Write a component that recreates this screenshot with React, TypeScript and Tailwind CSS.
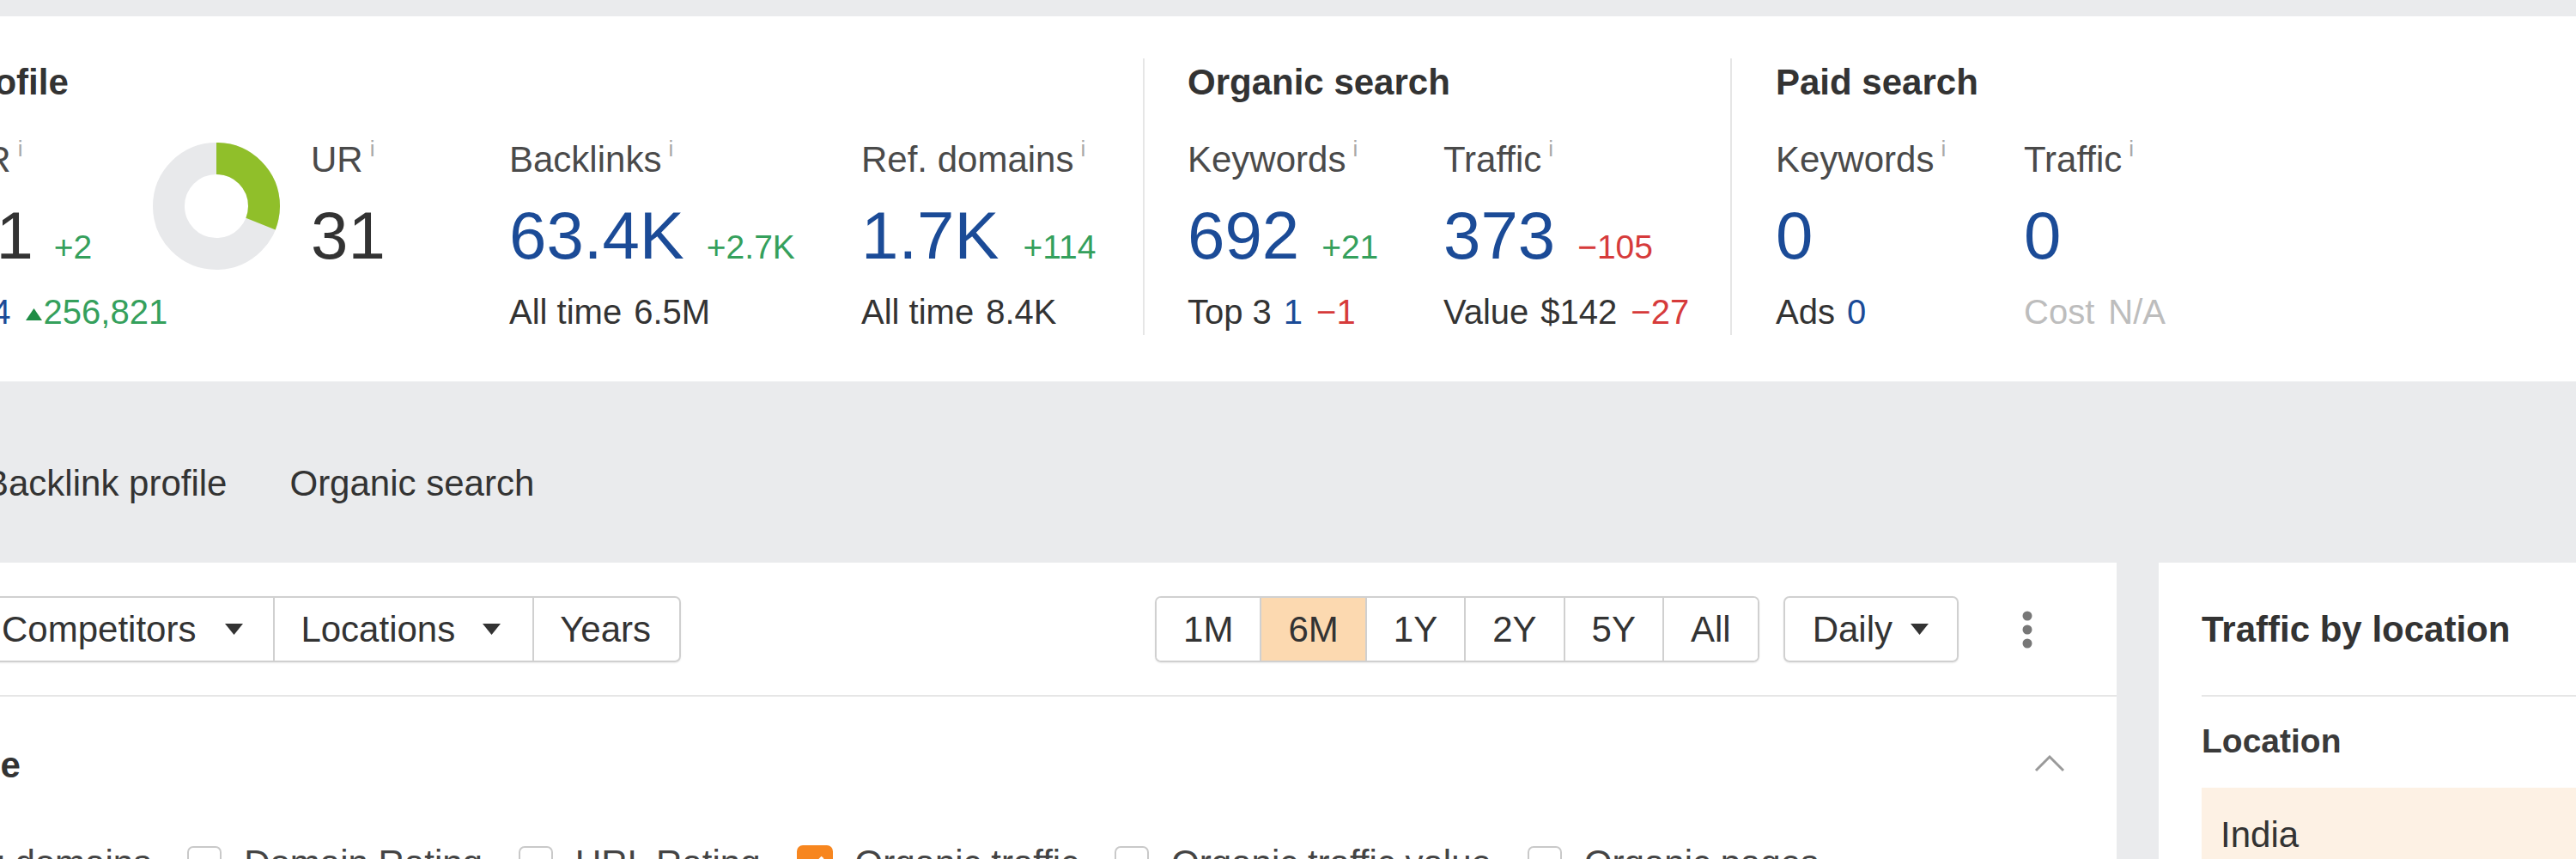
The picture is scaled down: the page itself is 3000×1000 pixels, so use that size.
import React from "react";

const Info = () => (
  <span className="relative -top-[18px] ml-[8px] text-[26px] text-[#a9a9a9]">i</span>
);

const Label = ({ children }: { children: React.ReactNode }) => (
  <div className="h-[48px] leading-[48px] text-[42px] text-[#4a4a4a] whitespace-nowrap">
    {children}
    <Info />
  </div>
);

const Donut = ({ value }: { value: number }) => {
  const r = 55.5;
  const c = 2 * Math.PI * r;
  return (
    <svg width="148" height="148" viewBox="0 0 148 148" className="mt-[4px] shrink-0">
      <circle cx="74" cy="74" r={r} fill="none" stroke="#e8e9eb" strokeWidth="37" />
      <circle
        cx="74"
        cy="74"
        r={r}
        fill="none"
        stroke="#90bf2a"
        strokeWidth="37"
        strokeDasharray={`${(c * value) / 100} ${c}`}
        transform="rotate(-90 74 74)"
      />
    </svg>
  );
};

const Caret = () => (
  <svg width="21" height="13" viewBox="0 0 21 13" className="shrink-0">
    <path d="M0 0h21L10.5 13z" fill="#333" />
  </svg>
);

const Checkbox = ({ checked }: { checked?: boolean }) =>
  checked ? (
    <span className="w-[42px] h-[42px] rounded-[7px] bg-[#f7861f] flex items-center justify-center shrink-0">
      <svg width="24" height="20" viewBox="0 0 24 20">
        <path d="M3 10l6 6L21 3" fill="none" stroke="#fff" strokeWidth="4" />
      </svg>
    </span>
  ) : (
    <span className="w-[40px] h-[40px] rounded-[7px] border-2 border-[#c9c9c9] bg-white shrink-0" />
  );

const periods = ["1M", "6M", "1Y", "2Y", "5Y", "All"];

const series = [
  { name: "Referring domains", checked: false },
  { name: "Domain Rating", checked: false },
  { name: "URL Rating", checked: false },
  { name: "Organic traffic", checked: true },
  { name: "Organic traffic value", checked: false },
  { name: "Organic pages", checked: false },
];

export default function App() {
  return (
    <div className="w-[3000px] h-[1000px] overflow-hidden bg-[#eaebed] font-['Liberation_Sans',Arial,sans-serif] text-[#333]">
      <div className="-ml-[233px] w-[3400px]">
        {/* overview metrics */}
        <div className="mt-[19px] h-[425px] bg-white pt-[49px] flex">
          <section className="w-[1564px] h-[322px] pt-[4px] shrink-0">
            <h2 className="text-[42px] leading-[48px] font-bold">Backlink profile</h2>
            <div className="mt-[42px] flex">
              <div className="w-[411px] shrink-0">
                <div className="flex">
                  <Donut value={41} />
                  <div className="ml-[37px]">
                    <Label>DR</Label>
                    <div className="mt-[25px] h-[78px] flex items-baseline whitespace-nowrap">
                      <span className="text-[78px] leading-[78px]">41</span>
                      <span className="ml-[24px] text-[39px] text-[#35a05c]">+2</span>
                    </div>
                  </div>
                </div>
                <div className="mt-[25px] h-[48px] leading-[48px] text-[40px] whitespace-nowrap flex items-center">
                  <span className="shrink-0">AR</span>
                  <span className="ml-[12px] shrink-0 text-[#1b4b97]">1,234,764</span>
                  <svg width="19" height="14" viewBox="0 0 19 14" className="ml-[17px] mt-[6px] shrink-0">
                    <path d="M9.5 0L19 14H0z" fill="#1f8c45" />
                  </svg>
                  <span className="ml-[2px] shrink-0 text-[#35a05c]">256,821</span>
                </div>
              </div>
              <div className="w-[415px] shrink-0 flex">
                <Donut value={31} />
                <div className="ml-[36px]">
                  <Label>UR</Label>
                  <div className="mt-[25px] h-[78px] flex items-baseline">
                    <span className="text-[78px] leading-[78px]">31</span>
                  </div>
                </div>
              </div>
              <div className="w-[410px] shrink-0">
                <Label>Backlinks</Label>
                <div className="mt-[25px] h-[78px] flex items-baseline whitespace-nowrap">
                  <span className="text-[78px] leading-[78px] text-[#1b4b97]">63.4K</span>
                  <span className="ml-[26px] text-[39px] text-[#35a05c]">+2.7K</span>
                </div>
                <div className="mt-[26px] h-[48px] leading-[48px] text-[40px] whitespace-nowrap">
                  All time<span className="ml-[14px]">6.5M</span>
                </div>
              </div>
              <div className="shrink-0">
                <Label>Ref. domains</Label>
                <div className="mt-[25px] h-[78px] flex items-baseline whitespace-nowrap">
                  <span className="text-[78px] leading-[78px] text-[#1b4b97]">1.7K</span>
                  <span className="ml-[28px] text-[39px] text-[#35a05c]">+114</span>
                </div>
                <div className="mt-[26px] h-[48px] leading-[48px] text-[40px] whitespace-nowrap">
                  All time<span className="ml-[14px]">8.4K</span>
                </div>
              </div>
            </div>
          </section>

          <section className="w-[684px] h-[322px] shrink-0 border-l-2 border-[#e6e6e6] pl-[50px] pt-[4px]">
            <h2 className="text-[42px] leading-[48px] font-bold">Organic search</h2>
            <div className="mt-[42px] flex">
              <div className="w-[298px] shrink-0">
                <Label>Keywords</Label>
                <div className="mt-[25px] h-[78px] flex items-baseline whitespace-nowrap">
                  <span className="text-[78px] leading-[78px] text-[#1b4b97]">692</span>
                  <span className="ml-[26px] text-[39px] text-[#35a05c]">+21</span>
                </div>
                <div className="mt-[26px] h-[48px] leading-[48px] text-[40px] whitespace-nowrap">
                  Top 3<span className="ml-[14px] text-[#1b4b97]">1</span>
                  <span className="ml-[16px] text-[#d63b3b]">−1</span>
                </div>
              </div>
              <div className="shrink-0">
                <Label>Traffic</Label>
                <div className="mt-[25px] h-[78px] flex items-baseline whitespace-nowrap">
                  <span className="text-[78px] leading-[78px] text-[#1b4b97]">373</span>
                  <span className="ml-[26px] text-[39px] text-[#d63b3b]">−105</span>
                </div>
                <div className="mt-[26px] h-[48px] leading-[48px] text-[40px] whitespace-nowrap">
                  Value<span className="ml-[14px]">$142</span>
                  <span className="ml-[16px] text-[#d63b3b]">−27</span>
                </div>
              </div>
            </div>
          </section>

          <section className="flex-1 h-[322px] border-l-2 border-[#e6e6e6] pl-[51px] pt-[4px]">
            <h2 className="text-[42px] leading-[48px] font-bold">Paid search</h2>
            <div className="mt-[42px] flex">
              <div className="w-[289px] shrink-0">
                <Label>Keywords</Label>
                <div className="mt-[25px] h-[78px] flex items-baseline">
                  <span className="text-[78px] leading-[78px] text-[#1b4b97]">0</span>
                </div>
                <div className="mt-[26px] h-[48px] leading-[48px] text-[40px] whitespace-nowrap">
                  Ads<span className="ml-[14px] text-[#1b4b97]">0</span>
                </div>
              </div>
              <div className="shrink-0">
                <Label>Traffic</Label>
                <div className="mt-[25px] h-[78px] flex items-baseline">
                  <span className="text-[78px] leading-[78px] text-[#1b4b97]">0</span>
                </div>
                <div className="mt-[26px] h-[48px] leading-[48px] text-[40px] whitespace-nowrap text-[#bdbdbd]">
                  Cost<span className="ml-[16px]">N/A</span>
                </div>
              </div>
            </div>
          </section>
        </div>

        {/* tabs */}
        <div className="h-[211px] pt-[95px] pl-[215px] flex gap-[73px] text-[42px] leading-[48px] whitespace-nowrap">
          <span>Backlink profile</span>
          <span>Organic search</span>
        </div>

        <div className="flex">
          {/* chart card */}
          <div className="w-[2698px] h-[345px] bg-white shrink-0">
            <div className="flex items-center pt-[39px] pb-[38px] border-b-2 border-[#e6e6e6] text-[42px] whitespace-nowrap">
              <div className="ml-[201px] flex h-[77px] border-2 border-[#d0d0d0] rounded-[7px] shadow-[0_1px_2px_rgba(0,0,0,0.08)]">
                <div className="flex items-center pl-[32px] pr-[35px]">
                  Competitors
                  <span className="ml-[34px]"><Caret /></span>
                </div>
                <div className="flex items-center pl-[30px] pr-[37px] border-l-2 border-[#d0d0d0]">
                  Locations
                  <span className="ml-[32px]"><Caret /></span>
                </div>
                <div className="flex items-center pl-[30px] pr-[33px] border-l-2 border-[#d0d0d0]">Years</div>
              </div>

              <div className="ml-auto flex items-center">
                <div className="flex h-[77px] border-2 border-[#d0d0d0] rounded-[7px] overflow-hidden shadow-[0_1px_2px_rgba(0,0,0,0.08)]">
                  {periods.map((p, i) => (
                    <div
                      key={p}
                      className={
                        (i > 0 ? "border-l-2 border-[#d0d0d0] " : "") +
                        (p === "6M" ? "bg-[#fcd9b0] " : "bg-white ") +
                        "flex items-center px-[31px]"
                      }
                    >
                      {p}
                    </div>
                  ))}
                </div>
                <div className="ml-[28px] h-[77px] flex items-center pl-[32px] pr-[33px] border-2 border-[#d0d0d0] rounded-[7px] shadow-[0_1px_2px_rgba(0,0,0,0.08)]">
                  Daily
                  <span className="ml-[21px]"><Caret /></span>
                </div>
                <div className="ml-[60px] mr-[84px] w-[40px] flex justify-center">
                  <svg width="12" height="44" viewBox="0 0 12 44">
                    <circle cx="6" cy="6" r="5.5" fill="#777" />
                    <circle cx="6" cy="22" r="5.5" fill="#777" />
                    <circle cx="6" cy="38" r="5.5" fill="#777" />
                  </svg>
                </div>
              </div>
            </div>

            <div className="mt-[56px] flex items-center justify-between pr-[60px]">
              <h3 className="text-[42px] leading-[48px] font-bold">Performance</h3>
              <svg width="36" height="22" viewBox="0 0 36 22" className="-mt-[6px]">
                <polyline points="2,20 18,4 34,20" fill="none" stroke="#9a9a9a" strokeWidth="3" />
              </svg>
            </div>

            <div className="mt-[66px] flex items-center text-[42px] leading-[48px] text-[#444] whitespace-nowrap">
              {series.map((s, i) => (
                <label key={s.name} className={(i > 0 ? "ml-[42px] " : "") + "flex items-center"}>
                  <Checkbox checked={s.checked} />
                  <span className="ml-[26px]">{s.name}</span>
                </label>
              ))}
            </div>
          </div>

          {/* location card */}
          <div className="flex-1 ml-[49px] h-[345px] bg-white pl-[50px]">
            <div className="pt-[54px] pb-[52px] border-b-2 border-[#e6e6e6]">
              <h3 className="text-[42px] leading-[48px] font-bold whitespace-nowrap">Traffic by location</h3>
            </div>
            <div className="mt-[28px] text-[39px] leading-[48px] font-bold text-[#3a3a3a]">Location</div>
            <div className="mt-[30px] h-[120px] bg-[#fdf1e4] pl-[22px] pt-[31px] text-[42px] leading-[48px]">
              India
            </div>
          </div>
        </div>
      </div>
    </div>
  );
}
